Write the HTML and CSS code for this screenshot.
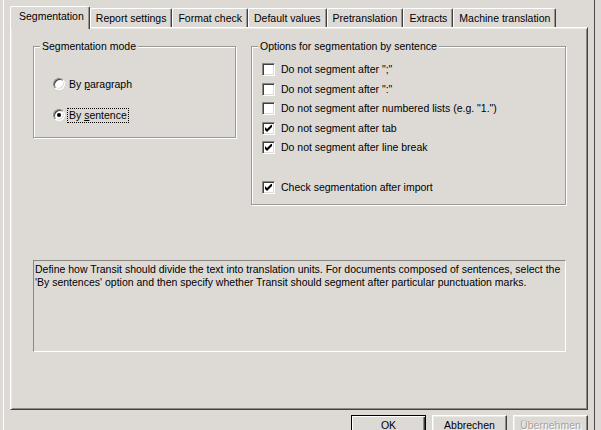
FILE: index.html
```html
<!DOCTYPE html>
<html lang="en">
<head>
  <meta charset="UTF-8">
  <title>Segmentation</title>
  <link rel="stylesheet" href="styles.css">
</head>
<body>

  <div class="frame">

    <!-- Tabs -->
    <div class="tabs">
      <div class="tab active">Segmentation</div>
      <div class="tab">Report settings</div>
      <div class="tab">Format check</div>
      <div class="tab">Default values</div>
      <div class="tab">Pretranslation</div>
      <div class="tab">Extracts</div>
      <div class="tab">Machine translation</div>
    </div>

    <div class="panel">
      <div class="groups">
        <fieldset class="group mode">
          <legend>Segmentation mode</legend>
          <div class="radio"><span class="dot"></span><span class="label">By <u>p</u>aragraph</span></div>
          <div class="radio checked"><span class="dot"></span><span class="label focus">By <u>s</u>entence</span></div>
        </fieldset>

        <fieldset class="group options">
          <legend>Options for segmentation by sentence</legend>
          <div class="check"><span class="box"></span>Do not segment after ";"</div>
          <div class="check"><span class="box"></span>Do not segment after ":"</div>
          <div class="check"><span class="box"></span>Do not segment after numbered lists (e.g. "1.")</div>
          <div class="check on"><span class="box"><svg width="7" height="7" viewBox="0 0 7 7"><path d="M0 2 L2 4 L7 -1 L7 2 L2 7 L0 5 Z"/></svg></span>Do not segment after tab</div>
          <div class="check on"><span class="box"><svg width="7" height="7" viewBox="0 0 7 7"><path d="M0 2 L2 4 L7 -1 L7 2 L2 7 L0 5 Z"/></svg></span>Do not segment after line break</div>
          <div class="check on spaced"><span class="box"><svg width="7" height="7" viewBox="0 0 7 7"><path d="M0 2 L2 4 L7 -1 L7 2 L2 7 L0 5 Z"/></svg></span>Check segmentation after import</div>
        </fieldset>
      </div>

      <div class="desc">Define how Transit should divide the text into translation units. For documents composed of sentences, select the 'By sentences' option and then specify whether Transit should segment after particular punctuation marks.</div>
    </div>

    <div class="buttons">
      <div class="btn default">OK</div>
      <div class="btn">Abbrechen</div>
      <div class="btn disabled">Übernehmen</div>
    </div>

  </div>

</body>
</html>
```

FILE: styles.css
```css
body {
  margin: 0;
  background: #dddad6;
  font-family: "Liberation Sans", Arial, sans-serif;
  font-size: 10.5px;
  line-height: 13px;
  color: #000;
  overflow: hidden;
}

.frame {
  margin-left: 3px;
  width: 592px;
  height: 430px;
  box-sizing: border-box;
  border-left: 1px solid #fff;
  border-right: 1px solid #4a4a4a;
  padding: 6px 6px 0 6px;
  display: flex;
  flex-direction: column;
  overflow: hidden;
}

/* Tabs */
.tabs {
  display: flex;
  align-items: flex-end;
  height: 21px;
  flex-shrink: 0;
}
.tab {
  height: 19px;
  box-sizing: border-box;
  padding: 3px 5px 0 5px;
  border: 1px solid #fff;
  border-right-color: #404040;
  border-bottom: none;
  border-radius: 2px 2px 0 0;
  box-shadow: inset -1px 0 0 #9a9692;
  white-space: nowrap;
}
.tab.active {
  position: relative;
  z-index: 1;
  height: 23px;
  margin-bottom: -2px;
  padding: 3px 5px 0 8px;
  background: #dddad6;
}

/* Panel */
.panel {
  height: 383px;
  flex-shrink: 0;
  box-sizing: border-box;
  border: 1px solid #fff;
  border-right-color: #404040;
  border-bottom-color: #404040;
  box-shadow: inset 1px 1px 0 #eceae6, inset -1px -1px 0 #8e8a86;
  padding: 12px 0 0 22px;
}
.groups {
  display: flex;
  gap: 15px;
  align-items: flex-start;
}

.group {
  margin: 0;
  padding: 0 6px;
  min-width: 0;
  box-sizing: border-box;
  border: 1px solid #9c9894;
  box-shadow: 1px 1px 0 #fff, inset 1px 1px 0 #fff;
}
.group legend {
  padding: 0 2px;
  background: #dddad6;
  line-height: 13px;
}
.mode {
  width: 203px;
  height: 98px;
  padding-top: 23px;
}
.options {
  width: 315px;
  height: 165px;
  padding-top: 7px;
}

/* Radio buttons */
.radio {
  display: flex;
  align-items: center;
  gap: 4px;
  height: 16px;
  margin-left: 13px;
}
.radio + .radio { margin-top: 15px; }
.dot {
  position: relative;
  width: 12px;
  height: 12px;
  box-sizing: border-box;
  border-radius: 50%;
  background: #fff;
  border: 1px solid;
  border-color: #8a8682 #fff #fff #8a8682;
  box-shadow: inset 1px 1px 0 #404040, inset -1px -1px 0 #dddad6;
}
.radio.checked .dot::after {
  content: "";
  position: absolute;
  left: 3px;
  top: 3px;
  width: 4px;
  height: 4px;
  border-radius: 50%;
  background: #000;
}
.focus {
  outline: 1px dotted #000;
  padding: 0 1px;
  margin-left: -1px;
}

/* Checkboxes */
.check {
  display: flex;
  align-items: center;
  gap: 6px;
  height: 19.5px;
  margin-left: 4px;
}
.check.spaced { margin-top: 20px; }
.box {
  width: 13px;
  height: 13px;
  box-sizing: border-box;
  background: #fff;
  border: 1px solid;
  border-color: #8a8682 #fff #fff #8a8682;
  box-shadow: inset 1px 1px 0 #404040, inset -1px -1px 0 #dddad6;
  display: flex;
  align-items: center;
  justify-content: center;
  flex-shrink: 0;
}
.box svg { fill: #000; }

/* Description */
.desc {
  width: 533px;
  height: 92px;
  box-sizing: border-box;
  margin-top: 55px;
  padding: 2px 1px;
  border: 1px solid;
  border-color: #8a8682 #fff #fff #8a8682;
}

/* Buttons */
.buttons {
  display: flex;
  justify-content: flex-end;
  gap: 6px;
  margin-top: 5px;
  flex-shrink: 0;
}
.btn {
  width: 75px;
  height: 23px;
  box-sizing: border-box;
  border: 1px solid;
  border-color: #fff #404040 #404040 #fff;
  box-shadow: inset -1px -1px 0 #8e8a86, inset 1px 1px 0 #eceae6;
  text-align: center;
  padding-top: 3px;
}
.btn.default {
  border-color: #000;
  box-shadow: inset 1px 1px 0 #fff, inset -1px -1px 0 #404040, inset -2px -2px 0 #8e8a86;
}
.btn.disabled {
  color: #a6a29e;
  text-shadow: 1px 1px 0 #fff;
}
```
